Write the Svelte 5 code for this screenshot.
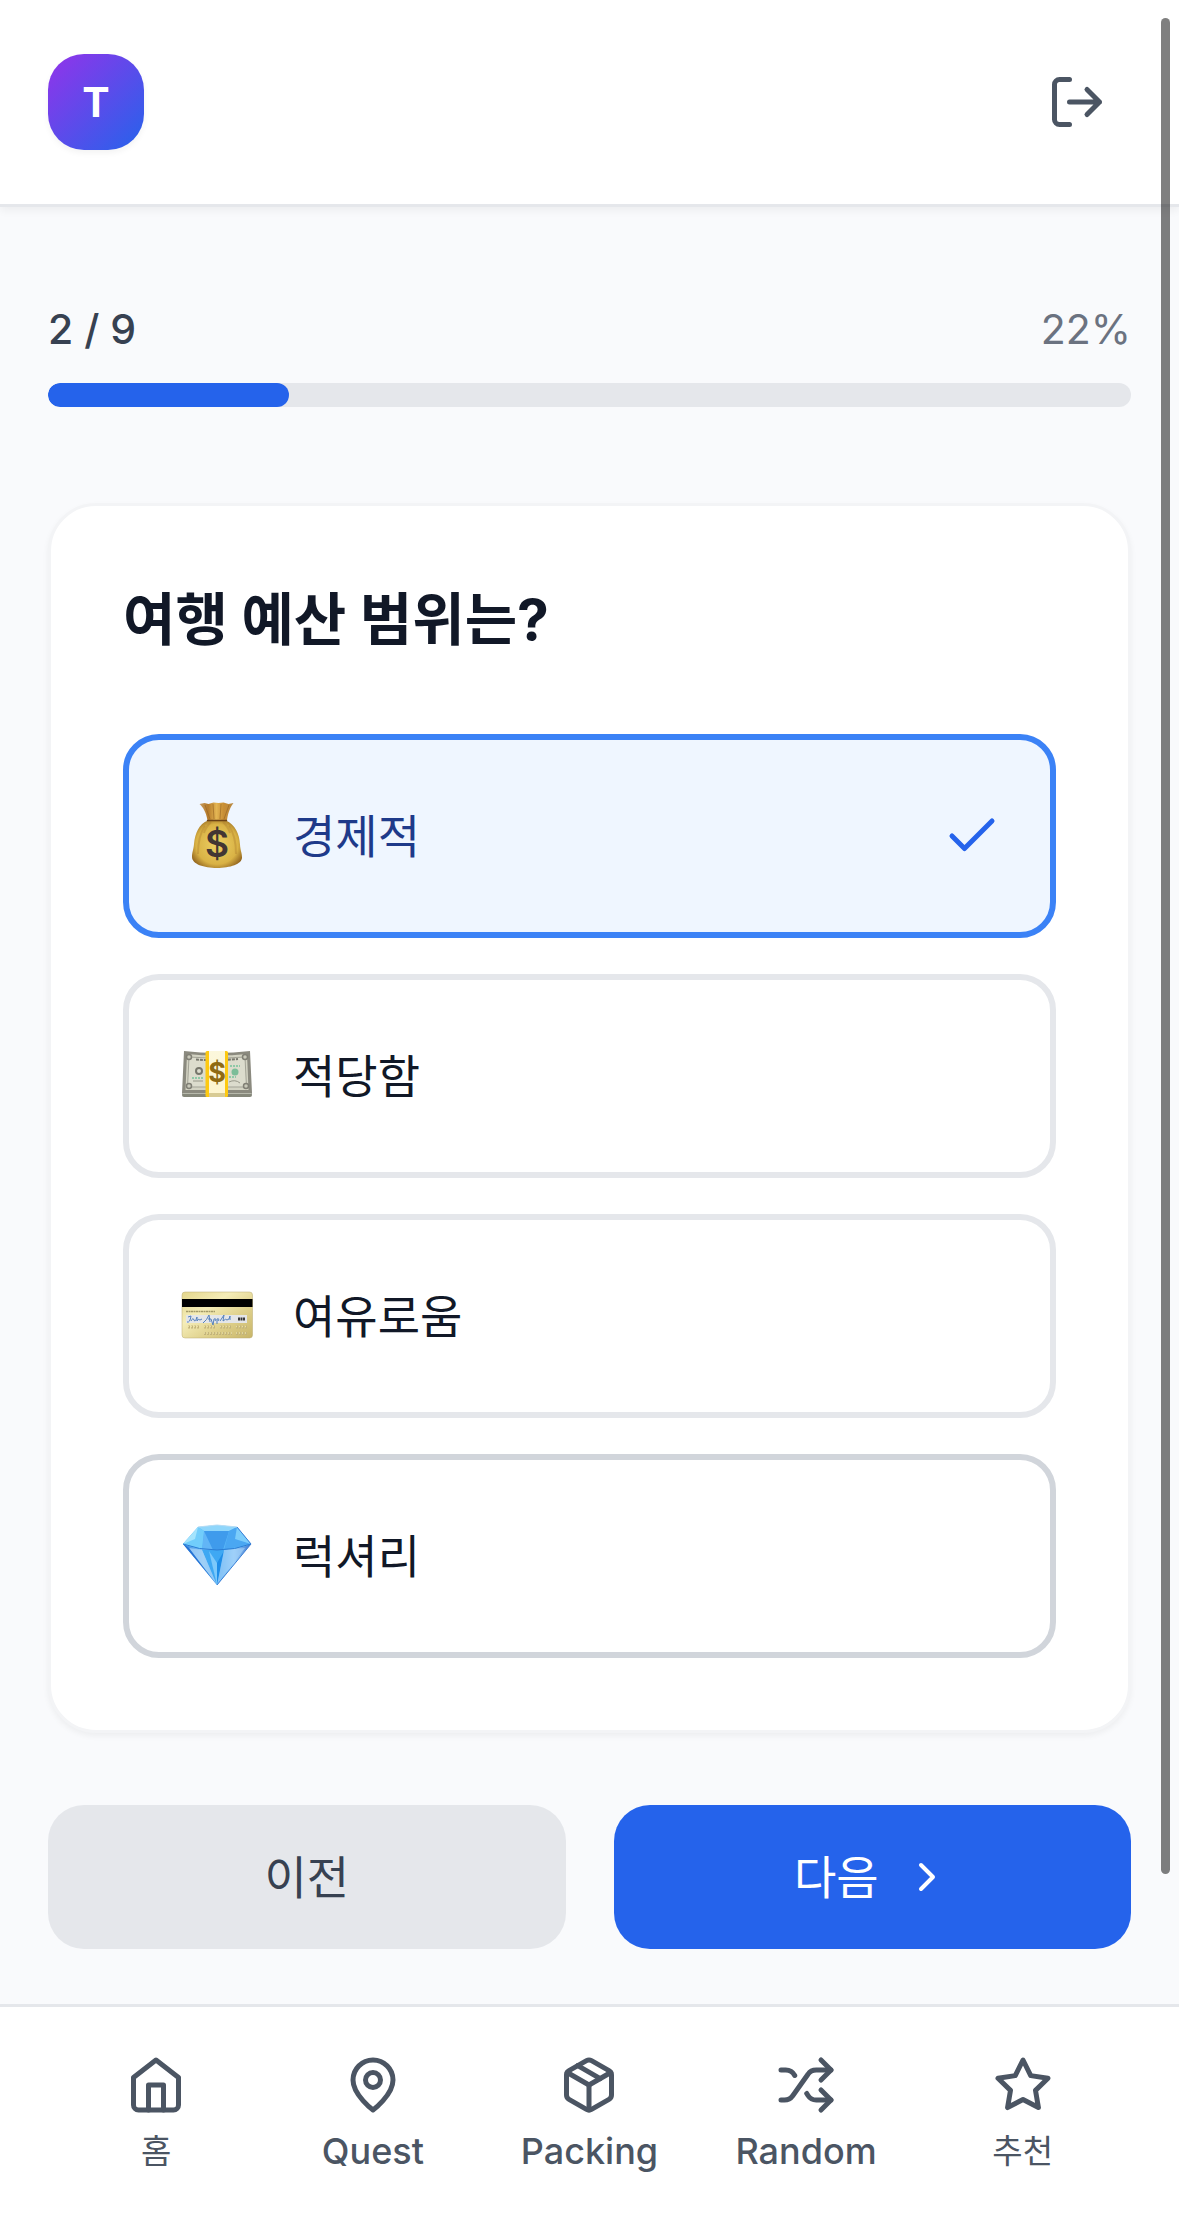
<script>
  const step = 2;
  const total = 9;
  const percent = (step / total) * 100;

  let selected = $state('economy');

  const options = [
    { id: 'economy', label: '경제적' },
    { id: 'moderate', label: '적당함' },
    { id: 'comfort', label: '여유로움' },
    { id: 'luxury', label: '럭셔리', hovered: true }
  ];

  const tabs = [
    {
      label: '홈',
      paths: ['M3 9l9-7 9 7v11a2 2 0 0 1-2 2H5a2 2 0 0 1-2-2z', 'M9 22V12h6v10']
    },
    {
      label: 'Quest',
      paths: [
        'M20 10c0 6-8 12-8 12s-8-6-8-12a8 8 0 0 1 16 0Z',
        'M15 10a3 3 0 1 1-6 0 3 3 0 0 1 6 0Z'
      ]
    },
    {
      label: 'Packing',
      paths: [
        'm7.5 4.27 9 5.15',
        'M21 8a2 2 0 0 0-1-1.73l-7-4a2 2 0 0 0-2 0l-7 4A2 2 0 0 0 3 8v8a2 2 0 0 0 1 1.73l7 4a2 2 0 0 0 2 0l7-4A2 2 0 0 0 21 16Z',
        'm3.3 7 8.7 5 8.7-5',
        'M12 22V12'
      ]
    },
    {
      label: 'Random',
      paths: [
        'M2 18h1.4c1.3 0 2.5-.6 3.3-1.7l6.1-8.6c.7-1.1 2-1.7 3.3-1.7H22',
        'm18 2 4 4-4 4',
        'M2 6h1.9c1.5 0 2.9.9 3.6 2.2',
        'M22 18h-5.9c-1.3 0-2.6-.7-3.3-1.8l-.5-.8',
        'm18 14 4 4-4 4'
      ]
    },
    {
      label: '추천',
      paths: [
        'M12 2l3.09 6.26L22 9.27l-5 4.87 1.18 6.88L12 17.77l-6.18 3.25L7 14.14 2 9.27l6.91-1.01z'
      ]
    }
  ];
</script>

{#snippet moneyBag()}
  <svg class="emoji" viewBox="0 0 72 72" aria-hidden="true">
    <defs>
      <radialGradient id="bag-body" cx="0.5" cy="0.5" r="0.6">
        <stop offset="0" stop-color="#ecd064" />
        <stop offset="0.7" stop-color="#d9b245" />
        <stop offset="1" stop-color="#8d5f1c" />
      </radialGradient>
      <linearGradient id="bag-neck" x1="0" y1="0" x2="1" y2="0">
        <stop offset="0" stop-color="#c79d62" />
        <stop offset="0.25" stop-color="#b57a2a" />
        <stop offset="0.5" stop-color="#e3b553" />
        <stop offset="0.7" stop-color="#c98f35" />
        <stop offset="1" stop-color="#b5853f" />
      </linearGradient>
    </defs>
    <path d="M18.500 4l5-1 4 1 5-1.500 5 .5 5-.5 5 1.500 5-1c-3 4-5 8-6.500 17H26.500C25 12 22 7 18.500 4Z" fill="url(#bag-neck)" />
    <path d="M24 5l5 14M32 4l1 15M40 4l-1 15M48 5l-5 14" stroke="#94601f" stroke-width="1" fill="none" opacity="0.6" />
    <path d="M27 20.500h18c9 4 13.500 13 14 24 .3 6 2 8 2 13C61 64 49 68 36 68S11 64 11 57c0-5 1.500-7 2-13 1-11 5-20 14-23.500Z" fill="url(#bag-body)" />
    <path d="M24 26c-5 7-7 15-7 28M30 22c-4 4-6 7-7 11M48 26c5 7 7 15 7 28M42 22c4 4 6 7 7 11" stroke="#a9782a" stroke-width="2" fill="none" opacity="0.35" />
    <path d="M26.500 20.500h19" stroke="#6b4216" stroke-width="1.500" stroke-linecap="round" />
    <text x="36" y="57" text-anchor="middle" font-size="37" font-weight="600" fill="#423533">$</text>
  </svg>
{/snippet}

{#snippet banknotes()}
  <svg class="emoji" viewBox="0 0 72 72" aria-hidden="true">
    <defs>
      <linearGradient id="note-band" x1="0" y1="0" x2="0" y2="1">
        <stop offset="0" stop-color="#fbf7dc" />
        <stop offset="0.91" stop-color="#fdf5cf" />
        <stop offset="0.92" stop-color="#d8cb94" />
        <stop offset="1" stop-color="#d8cb94" />
      </linearGradient>
    </defs>
    <path d="M2 50h68l1 5q0 2-2 2H3q-2 0-2-2Z" fill="#85877a" />
    <path d="M2 53.500h68" stroke="#b7b9ac" stroke-width="1" />
    <path d="M3 11q33 4 66 0l2 42H1Z" fill="#8b8a7f" />
    <path d="M6 14q30 3 60 0l1.500 36h-63Z" fill="#d3d3c3" />
    <path d="M8 17q28 3 56 0l1.500 30h-59Z" fill="#dcdccd" stroke="#a3a396" stroke-width="1" />
    <g fill="#c9c9ba" stroke="#807f75" stroke-width="1.500">
      <circle cx="8" cy="17" r="2.500" />
      <circle cx="64" cy="17" r="2.500" />
      <circle cx="8" cy="46" r="2.500" />
      <circle cx="65" cy="46" r="2.500" />
    </g>
    <path d="M15 19.500q20 1.500 42-.5" stroke="#77776c" stroke-width="2" stroke-dasharray="3 1" fill="none" />
    <circle cx="18" cy="31" r="3" fill="none" stroke="#77776c" stroke-width="2" />
    <circle cx="54" cy="32" r="3.500" fill="#7bbd98" />
    <path d="M49 26h10M11 38h11M48 37h7" stroke="#8ec9a7" stroke-width="2" stroke-dasharray="2 1" />
    <path d="M12 41h10M48 42q6-3 11 1" stroke="#98988a" stroke-width="1" fill="none" />
    <rect x="24.500" y="11" width="22.500" height="46" rx="1.500" fill="#fdc912" />
    <rect x="28" y="11" width="16" height="46" fill="url(#note-band)" />
    <text x="36" y="42" text-anchor="middle" font-size="27" font-weight="700" fill="#8f6a12">$</text>
  </svg>
{/snippet}

{#snippet creditCard()}
  <svg class="emoji" viewBox="0 0 72 72" aria-hidden="true">
    <defs>
      <linearGradient id="card-face" x1="0" y1="0" x2="1" y2="1">
        <stop offset="0" stop-color="#e3d68c" />
        <stop offset="0.35" stop-color="#f5edb8" />
        <stop offset="0.65" stop-color="#dfd18c" />
        <stop offset="1" stop-color="#c8b568" />
      </linearGradient>
    </defs>
    <rect x="1" y="12" width="70.500" height="46" rx="3" fill="url(#card-face)" stroke="#b9ab72" stroke-width="0.500" />
    <rect x="1" y="19" width="70.500" height="8" fill="#000" />
    <path d="M5 31.500h29" stroke="#a39a68" stroke-width="1.500" stroke-dasharray="2 0.500" />
    <rect x="5" y="35" width="61" height="8" fill="#e4e6e8" />
    <path d="M6 42q3 1 4-6l-3 1M10 41q2-4 3-1t3-3v4q1-3 3-1l2-1M22 43q4-3 6-8l1 7M27 39h3l2 6 1-6q3-1 1 2M36 44v-5q3-1 1 2M39 41l4-6-1 6q3-3 4-1l2-1 1-3v4" fill="none" stroke="#5581bd" stroke-width="1" />
    <path d="M57 39h7" stroke="#383838" stroke-width="3" stroke-dasharray="2 0.500" />
    <path d="M7 47h12M23 47h12M39 47h12M55 47h12M23 53.500h28M55 53.500h12" stroke="#c3b47a" stroke-width="3" stroke-dasharray="2 1" />
    <path d="M7 46.500h12M23 46.500h12M39 46.500h12M55 46.500h12M23 53h28M55 53h12" stroke="#e9dea6" stroke-width="1.500" stroke-dasharray="1 2" />
  </svg>
{/snippet}

{#snippet gem()}
  <svg class="emoji" viewBox="0 0 72 72" aria-hidden="true">
    <defs>
      <linearGradient id="gem-side" x1="0" y1="0" x2="1" y2="0">
        <stop offset="0" stop-color="#2f7fdc" />
        <stop offset="0.3" stop-color="#8fd0fb" />
        <stop offset="0.5" stop-color="#2f9df0" />
        <stop offset="0.75" stop-color="#9fd4fb" />
        <stop offset="1" stop-color="#3a74cf" />
      </linearGradient>
    </defs>
    <path d="M2 24 36 65 70 24Q36 36 2 24Z" fill="url(#gem-side)" />
    <path d="M2 24 17 7l19-2 20 2 14 17q-14 6-34 6T2 24Z" fill="#5bb9f8" />
    <path d="M17 7l19-2 20 2-8 4H23Z" fill="#8fd6fb" />
    <path d="M23 11h25l-6 19H21Z" fill="#3f9bec" />
    <path d="M23 11l9 19H21Z" fill="#62b5f6" />
    <path d="M17 7l6 4-2 18L2 24Z" fill="#71cdfb" />
    <path d="M17 7l-3 12L2 24Z" fill="#a4e4fd" />
    <path d="M48 11l8-4 14 17-27 6Z" fill="#4aa7f2" />
    <path d="M56 7l14 17-16-5Z" fill="#7ccdfb" />
    <path d="M21 30 36 65 43 30Z" fill="#3ea8f3" />
    <path d="M28 31l8 34V43Z" fill="#7cc9fb" />
    <path d="M36 43l7-12-7 34Z" fill="#1e8de8" />
    <path d="M8 28l13 2 15 35Z" fill="#a3cff6" opacity="0.8" />
    <path d="M2 24l6 4 28 37Z" fill="#2672d4" />
    <path d="M64 28l-21 2-7 35Z" fill="#9fcff8" opacity="0.7" />
    <path d="M2 24q16 6 34 6t34-6" fill="none" stroke="#2b7cd4" stroke-width="1" />
    <path d="M17 7l19-2 20 2" fill="none" stroke="#b7ddf5" stroke-width="1" />
    <path d="M56 7l14 17-34 41" fill="none" stroke="#3b7fd6" stroke-width="1" />
  </svg>
{/snippet}

<div class="page">
  <header>
    <a class="logo" href="#home" aria-label="홈">T</a>
    <button class="logout" type="button" aria-label="로그아웃">
      <svg class="icon" viewBox="0 0 24 24" aria-hidden="true">
        <path d="M9 21H5a2 2 0 0 1-2-2V5a2 2 0 0 1 2-2h4M16 17l5-5-5-5M21 12H9" />
      </svg>
    </button>
  </header>

  <main>
    <section class="progress">
      <div class="counts">
        <span class="step">{step} / {total}</span>
        <span class="percent">{Math.round(percent)}%</span>
      </div>
      <div class="track" role="progressbar" aria-label="진행률" aria-valuenow={Math.round(percent)} aria-valuemin="0" aria-valuemax="100">
        <div class="fill" style="width: {percent}%"></div>
      </div>
    </section>

    <section class="card">
      <h2>여행 예산 범위는?</h2>
      <div class="options">
        {#each options as option (option.id)}
          <button
            type="button"
            class={['option', selected === option.id && 'selected', option.hovered && 'hovered']}
            aria-pressed={selected === option.id}
            onclick={() => (selected = option.id)}
          >
            <span class="picture">
              {#if option.id === 'economy'}
                {@render moneyBag()}
              {:else if option.id === 'moderate'}
                {@render banknotes()}
              {:else if option.id === 'comfort'}
                {@render creditCard()}
              {:else}
                {@render gem()}
              {/if}
            </span>
            <span class="label">{option.label}</span>
            {#if selected === option.id}
              <svg class="icon check" viewBox="0 0 24 24" aria-hidden="true">
                <path d="M20 6 9 17l-5-5" />
              </svg>
            {/if}
          </button>
        {/each}
      </div>
    </section>

    <div class="actions">
      <button class="prev" type="button">이전</button>
      <button class="next" type="button">
        다음
        <svg class="icon chevron" viewBox="0 0 24 24" aria-hidden="true">
          <path d="m9 18 6-6-6-6" />
        </svg>
      </button>
    </div>
  </main>

  <nav>
    {#each tabs as tab (tab.label)}
      <a href="#{tab.label}">
        <svg class="icon" viewBox="0 0 24 24" aria-hidden="true">
          {#each tab.paths as d}
            <path {d} />
          {/each}
        </svg>
        <span class={{ hangul: !/[A-Z]/i.test(tab.label) }}>{tab.label}</span>
      </a>
    {/each}
  </nav>

  <div class="scroll-thumb" aria-hidden="true"></div>
</div>

<style>
  :global(body) {
    background: #f9fafb;
  }

  .page {
    display: flex;
    flex-direction: column;
    min-height: 100vh;
    background: #f9fafc;
    color: #111827;
    font-family: Inter, 'Noto Sans CJK KR', sans-serif;
  }

  .page * {
    box-sizing: border-box;
  }

  button {
    margin: 0;
    border: 0;
    padding: 0;
    background: none;
    font: inherit;
    color: inherit;
    cursor: pointer;
  }

  .icon {
    display: block;
    flex: none;
    width: 60px;
    height: 60px;
    fill: none;
    stroke: currentColor;
    stroke-width: 2;
    stroke-linecap: round;
    stroke-linejoin: round;
  }

  header {
    display: flex;
    align-items: center;
    justify-content: space-between;
    padding: 48px;
    background: #fff;
    border-bottom: 3px solid #e5e7eb;
    box-shadow: 0 3px 9px rgb(0 0 0 / 0.06);
  }

  .logo {
    display: grid;
    place-items: center;
    width: 96px;
    height: 96px;
    border-radius: 36px;
    background: linear-gradient(to bottom right, #9333ea, #2563eb);
    box-shadow: 0 3px 6px rgb(0 0 0 / 0.05);
    color: #fff;
    font-size: 41px;
    font-weight: 700;
    text-decoration: none;
  }

  .logout {
    padding: 24px;
    color: #4b5563;
  }

  main {
    display: flex;
    flex: 1;
    flex-direction: column;
    padding: 92px 48px 48px;
  }

  .counts {
    display: flex;
    justify-content: space-between;
    margin-bottom: 24px;
    font-size: 41px;
    line-height: 60px;
  }

  .step {
    color: #374151;
    font-weight: 500;
  }

  .percent {
    color: #6b7280;
  }

  .track {
    height: 24px;
    border-radius: 12px;
    background: #e5e7eb;
    overflow: hidden;
  }

  .fill {
    height: 100%;
    border-radius: 12px;
    background: #2563eb;
  }

  .card {
    margin-top: 96px;
    padding: 72px;
    border: 3px solid #f3f4f6;
    border-radius: 48px;
    background: #fff;
    box-shadow: 0 3px 6px rgb(0 0 0 / 0.05);
  }

  h2 {
    margin: 0 0 72px;
    font-size: 57px;
    font-weight: 700;
    line-height: 84px;
  }

  .options {
    display: flex;
    flex-direction: column;
    gap: 36px;
  }

  .option {
    display: flex;
    align-items: center;
    gap: 36px;
    padding: 48px;
    border: 6px solid #e5e7eb;
    border-radius: 36px;
    text-align: left;
  }

  .option.hovered {
    border-color: #d1d5db;
  }

  .option.selected {
    border-color: #3b82f6;
    background: #eff6ff;
    color: #1e3a8a;
  }

  .picture {
    display: grid;
    place-items: center;
    width: 80px;
    height: 96px;
  }

  .emoji {
    display: block;
    width: 72px;
    height: 72px;
  }

  .label {
    flex: 1;
    font-size: 46px;
    font-weight: 400;
    line-height: 72px;
  }

  .check {
    color: #2563eb;
  }

  .actions {
    display: grid;
    grid-template-columns: 1fr 1fr;
    gap: 48px;
    margin-top: 72px;
  }

  .actions button {
    display: flex;
    align-items: center;
    justify-content: center;
    gap: 24px;
    padding: 36px;
    border-radius: 36px;
    font-size: 46px;
    font-weight: 400;
    line-height: 72px;
  }

  .actions .prev {
    background: #e5e7eb;
    color: #374151;
  }

  .actions .next {
    background: #2563eb;
    color: #fff;
  }

  .chevron {
    width: 48px;
    height: 48px;
  }

  nav {
    display: grid;
    grid-template-columns: repeat(5, 1fr);
    padding: 24px 48px;
    border-top: 3px solid #e5e7eb;
    background: #fff;
  }

  nav a {
    display: flex;
    flex-direction: column;
    align-items: center;
    gap: 12px;
    padding: 24px 0;
    color: #4b5563;
    font-size: 36px;
    font-weight: 500;
    line-height: 48px;
    text-decoration: none;
  }

  nav .hangul {
    font-size: 33px;
    font-weight: 400;
  }

  .scroll-thumb {
    position: fixed;
    top: 18px;
    right: 9px;
    width: 9px;
    height: 83.5vh;
    border-radius: 5px;
    background: rgb(0 0 0 / 0.5);
    pointer-events: none;
  }
</style>
